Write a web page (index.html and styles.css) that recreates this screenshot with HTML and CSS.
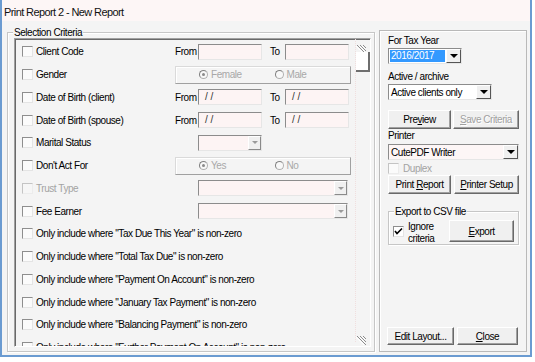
FILE: index.html
```html
<!DOCTYPE html>
<html lang="en">
<head>
    <meta charset="UTF-8">
    <title>Print Report 2 - New Report</title>
    <link rel="stylesheet" href="styles.css">
</head>
<body>
    <div class="window">
        <div class="titlebar">Print Report 2 - New Report</div>
        <div class="client">
            <!-- left: selection criteria -->
            <div class="group criteria">
                <span class="group-title">Selection Criteria</span>
                <div class="scrollbox">
                    <div class="rows">
                        <div class="row">
                            <span class="crit"><span class="chk"></span>Client Code</span>
                            <span class="from">From</span><span class="edit"></span>
                            <span class="to">To</span><span class="edit"></span>
                        </div>
                        <div class="row">
                            <span class="crit"><span class="chk"></span>Gender</span>
                            <div class="radios">
                                <span class="opt"><span class="radio on"></span>Female</span>
                                <span class="opt"><span class="radio"></span>Male</span>
                            </div>
                        </div>
                        <div class="row">
                            <span class="crit"><span class="chk"></span>Date of Birth (client)</span>
                            <span class="from">From</span><span class="edit">/ /</span>
                            <span class="to">To</span><span class="edit">/ /</span>
                        </div>
                        <div class="row">
                            <span class="crit"><span class="chk"></span>Date of Birth (spouse)</span>
                            <span class="from">From</span><span class="edit">/ /</span>
                            <span class="to">To</span><span class="edit">/ /</span>
                        </div>
                        <div class="row">
                            <span class="crit"><span class="chk"></span>Marital Status</span>
                            <span class="from"></span><span class="combo small"><span class="drop"></span></span>
                        </div>
                        <div class="row">
                            <span class="crit"><span class="chk"></span>Don't Act For</span>
                            <div class="radios">
                                <span class="opt"><span class="radio on"></span>Yes</span>
                                <span class="opt"><span class="radio"></span>No</span>
                            </div>
                        </div>
                        <div class="row disabled">
                            <span class="crit"><span class="chk"></span>Trust Type</span>
                            <span class="from"></span><span class="combo wide"><span class="drop"></span></span>
                        </div>
                        <div class="row">
                            <span class="crit"><span class="chk"></span>Fee Earner</span>
                            <span class="from"></span><span class="combo wide"><span class="drop"></span></span>
                        </div>
                        <div class="row"><span class="chk"></span>Only include where &quot;Tax Due This Year&quot; is non-zero</div>
                        <div class="row"><span class="chk"></span>Only include where &quot;Total Tax Due&quot; is non-zero</div>
                        <div class="row"><span class="chk"></span>Only include where &quot;Payment On Account&quot; is non-zero</div>
                        <div class="row"><span class="chk"></span>Only include where &quot;January Tax Payment&quot; is non-zero</div>
                        <div class="row"><span class="chk"></span>Only include where &quot;Balancing Payment&quot; is non-zero</div>
                        <div class="row"><span class="chk"></span>Only include where &quot;Further Payment On Account&quot; is non-zero</div>
                    </div>
                    <span class="vline"></span>
                    <span class="grip grip-top"><svg width="10" height="9" viewBox="0 0 10 9"><path d="M1 0L10 9M4 0L10 6M7 0L10 3" stroke="#8c8c8c" fill="none"/><path d="M0 1L8 9M3 1L9 7M6 1L9 4" stroke="#fff" fill="none"/></svg></span>
                    <span class="thumb"></span>
                    <span class="grip grip-bottom"><svg width="10" height="9" viewBox="0 0 10 9"><path d="M1 0L10 9M4 0L10 6M7 0L10 3" stroke="#8c8c8c" fill="none"/><path d="M0 1L8 9M3 1L9 7M6 1L9 4" stroke="#fff" fill="none"/></svg></span>
                </div>
            </div>

            <!-- right: options -->
            <div class="side">
                <div class="lbl">For Tax Year</div>
                <div class="combo year"><span class="sel">2016/2017</span><span class="drop dark"></span></div>
                <div class="lbl gap6">Active / archive</div>
                <div class="combo archive"><span class="val">Active clients only</span><span class="drop dark"></span></div>
                <div class="btnrow gap10">
                    <button class="btn w63">Pre<u>v</u>iew</button>
                    <button class="btn w66 off"><u>S</u>ave Criteria</button>
                </div>
                <div class="lbl">Printer</div>
                <div class="combo printer"><span class="val">CutePDF Writer</span><span class="drop dark"></span></div>
                <div class="duplex"><span class="chk"></span>Duplex</div>
                <div class="btnrow gap1 g3">
                    <button class="btn w63">Print <u>R</u>eport</button>
                    <button class="btn w65"><u>P</u>rinter Setup</button>
                </div>
                <div class="group export">
                    <span class="group-title">Export to CSV file</span>
                    <span class="chk checked"><svg width="9" height="9" viewBox="0 0 9 9"><path d="M1 4L3 6.5L8 1.5" stroke="#000" stroke-width="1.6" fill="none"/></svg></span>
                    <span class="ignore">Ignore<br>criteria</span>
                    <button class="btn export-btn"><u>E</u>xport</button>
                </div>
                <div class="btnrow bottom">
                    <button class="btn w67">Edit Layout...</button>
                    <button class="btn w61"><u>C</u>lose</button>
                </div>
            </div>
        </div>
    </div>
</body>
</html>
```

FILE: styles.css
```css
body {
    margin: 0;
    background: #fff;
    font: 10px "Liberation Sans", Arial, sans-serif;
    letter-spacing: -0.45px;
    color: #000;
}

.window {
    width: 532px;
    height: 357px;
    box-sizing: border-box;
    border: 2px solid #6b9bd1;
    border-top: 0;
    display: flex;
    flex-direction: column;
    background: #f4f4f4;
    white-space: nowrap;
}

.titlebar {
    height: 21px;
    flex: none;
    background: #fdf6f6;
    padding-left: 2px;
    line-height: 24px;
    font-size: 11px;
    letter-spacing: -0.6px;
    color: #111;
}

.client {
    flex: 1;
    min-height: 0;
    display: flex;
    gap: 4px;
    padding: 9px 3px 3px 5px;
}

/* etched group frame */
.group {
    position: relative;
    box-sizing: border-box;
    border: 1px solid #c6c6c6;
    box-shadow: inset 1px 1px 0 #fff, 1px 1px 0 #fff;
}

.group-title {
    position: absolute;
    top: -7px;
    left: 5px;
    padding: 0 1px;
    background: #f4f4f4;
    line-height: 13px;
}

.criteria {
    width: 368px;
    margin-top: 2px;
    padding: 5px 3px 4px 6px;
    display: flex;
    min-height: 0;
}

.scrollbox {
    flex: 1;
    position: relative;
    overflow: hidden;
    border-top: 1px solid #a0a0a0;
    border-left: 1px solid #a0a0a0;
    border-right: 1px solid #fff;
    border-bottom: 1px solid #fff;
    box-shadow: inset 1px 1px 0 #696969;
}

.rows {
    padding-top: 1.5px;
}

.row {
    display: flex;
    align-items: center;
    height: 22.75px;
    padding-left: 7px;
}

.crit {
    width: 153px;
    display: flex;
    align-items: center;
}

.chk {
    width: 11px;
    height: 11px;
    box-sizing: border-box;
    margin-right: 3px;
    flex: none;
    background: #fbfbfb;
    border-top: 1px solid #8e8e8e;
    border-left: 1px solid #8e8e8e;
    border-right: 1px solid #e4e4e4;
    border-bottom: 1px solid #e4e4e4;
    display: flex;
    align-items: center;
    justify-content: center;
}

.disabled {
    color: #a3a3a3;
}

.disabled .chk {
    border-color: #c4c4c4 #ececec #ececec #c4c4c4;
    background: #f6f6f6;
}

.from {
    width: 23px;
}

.to {
    width: 15px;
    margin-left: 8px;
}

.edit {
    width: 64px;
    height: 16px;
    box-sizing: border-box;
    background: #fdf4f4;
    border-top: 1px solid #8c8c8c;
    border-left: 1px solid #8c8c8c;
    border-right: 1px solid #e6e6e6;
    border-bottom: 1px solid #e6e6e6;
    padding-left: 6px;
    line-height: 14px;
    letter-spacing: 0;
    color: #333;
}

.radios {
    width: 176px;
    height: 18px;
    box-sizing: border-box;
    display: flex;
    align-items: center;
    padding-left: 23px;
    border: 1px solid #dadada;
    border-right-color: #a0a0a0;
    border-bottom-color: #a0a0a0;
    box-shadow: inset 1px 1px 0 #fff;
    color: #a8a8a8;
}

.opt {
    width: 88px;
    display: flex;
    align-items: center;
}

.radio {
    width: 9px;
    height: 9px;
    box-sizing: border-box;
    margin-right: 3px;
    border-radius: 50%;
    border: 1px solid #b0b0b0;
    border-top-color: #808080;
    border-left-color: #808080;
    background: #f8f8f8;
    position: relative;
}

.radio.on::after {
    content: "";
    position: absolute;
    left: 2px;
    top: 2px;
    width: 3px;
    height: 3px;
    border-radius: 50%;
    background: #8a8a8a;
}

.combo {
    height: 16px;
    box-sizing: border-box;
    display: flex;
    align-items: center;
    background: #fdf4f4;
    border-top: 1px solid #8c8c8c;
    border-left: 1px solid #8c8c8c;
    border-right: 1px solid #e6e6e6;
    border-bottom: 1px solid #e6e6e6;
}

.combo.small {
    width: 64px;
}

.combo.wide {
    width: 150px;
}

.drop {
    margin-left: auto;
    width: 13px;
    height: 14px;
    box-sizing: border-box;
    background: #f0f0f0;
    border: 1px solid;
    border-color: #fff #8a8a8a #8a8a8a #fff;
    display: flex;
    align-items: center;
    justify-content: center;
    flex: none;
}

.drop::after {
    content: "";
    border-left: 3px solid transparent;
    border-right: 3px solid transparent;
    border-top: 3px solid #9a9a9a;
}

.drop.dark {
    width: 15px;
    border-color: #fff #555 #555 #fff;
}

.drop.dark::after {
    border-left-width: 4px;
    border-right-width: 4px;
    border-top: 4px solid #000;
}

.vline {
    position: absolute;
    left: 340px;
    top: 0;
    bottom: 4px;
    border-left: 1px dotted #f0dede;
}

.grip {
    position: absolute;
    left: 341px;
    line-height: 0;
}

.grip-top {
    top: 6px;
}

.grip-bottom {
    top: 297px;
}

.thumb {
    position: absolute;
    left: 341px;
    top: 13px;
    width: 14px;
    height: 20px;
    box-sizing: border-box;
    background: #fff;
    border-right: 2px solid #6e6e6e;
    border-bottom: 2px solid #6e6e6e;
}

/* right hand panel */
.side {
    width: 148px;
    box-sizing: border-box;
    border: 1px solid #b9b9b9;
    box-shadow: inset 1px 1px 0 #fff;
    padding: 3px 7px 6px 8px;
    display: flex;
    flex-direction: column;
    min-height: 0;
}

.lbl {
    line-height: 13px;
    height: 13px;
}

.gap6 {
    margin-top: 6px;
}

.gap10 {
    margin-top: 10px;
}

.gap1 {
    margin-top: 1px;
}

.side .combo {
    margin-top: 1px;
    background: #fff;
}

.combo.year {
    width: 74px;
}

.combo.archive {
    width: 104px;
}

.combo.printer {
    width: 131px;
    margin-top: 2px;
    background: #fdf6f6;
}

.sel {
    flex: 1;
    align-self: stretch;
    margin: 1px;
    padding-left: 1px;
    background: #3399ff;
    color: #fff;
    line-height: 12px;
}

.val {
    padding-left: 2px;
}

.btnrow {
    display: flex;
    gap: 2px;
}

.btnrow.g3 {
    gap: 3px;
}

.btn {
    height: 19px;
    box-sizing: border-box;
    padding: 0;
    font: inherit;
    letter-spacing: inherit;
    white-space: nowrap;
    color: #000;
    background: #f0f0f0;
    border: 1px solid;
    border-color: #fff #696969 #696969 #fff;
    box-shadow: inset -1px -1px 0 #a0a0a0;
}

.btn.off {
    color: #a0a0a0;
    text-shadow: 1px 1px 0 #fff;
}

.w61 { width: 61px; }
.w63 { width: 63px; }
.w65 { width: 65px; }
.w66 { width: 66px; }
.w67 { width: 67px; }

.duplex {
    margin-top: 2px;
    height: 12px;
    display: flex;
    align-items: center;
    color: #a3a3a3;
}

.duplex .chk {
    border-color: #c4c4c4 #ececec #ececec #c4c4c4;
    margin-right: 4px;
}

.export {
    margin-top: 17px;
    width: 131px;
    height: 34px;
    flex: none;
    display: flex;
    align-items: flex-start;
    padding: 13px 4px 0 4px;
}

.export .chk {
    background: #fff;
    margin-top: 1px;
}

.ignore {
    margin-left: 1px;
    margin-top: -4px;
    line-height: 12px;
}

.export-btn {
    margin-left: auto;
    margin-top: -5px;
    width: 65px;
    height: 22px;
}

.btnrow.bottom {
    margin-top: auto;
    margin-left: -1px;
    gap: 3px;
}

.bottom .btn {
    height: 18px;
}
```
